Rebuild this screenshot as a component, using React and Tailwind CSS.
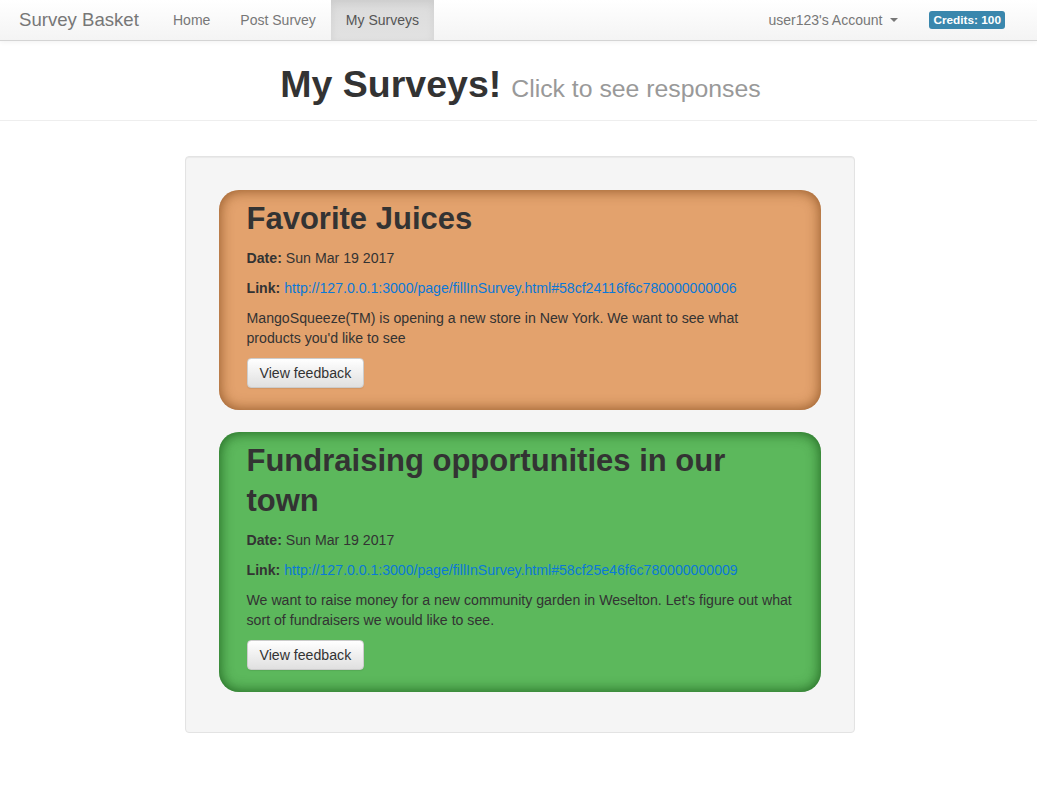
import React from "react";

const font = { fontFamily: '"Liberation Sans", Arial, sans-serif' };

function Card({ color, shadow, title, date, link, desc }) {
  return (
    <div
      className={`rounded-[20px] pt-[9px] pb-[22px] pl-[28px] pr-[27px] mb-[22px] ${color} ${shadow}`}
    >
      <h2 className="text-[31px] leading-[40px] font-bold text-[#333] mb-[9px]">{title}</h2>
      <p className="text-[14.15px] leading-[20px] text-[#333] mb-[10px]">
        <b>Date:</b> {date}
      </p>
      <p className="text-[14.15px] leading-[20px] text-[#333] mb-[10px]">
        <b>Link:</b> <a className="text-[#0a78d8] text-[14.1px]">{link}</a>
      </p>
      <p className="text-[14.15px] leading-[20px] text-[#333] mb-[10px]">{desc}</p>
      <button className="text-[14.15px] leading-[20px] text-[#333] px-[12px] py-[4px] border border-[#ccc] rounded-[4px] bg-gradient-to-b from-white to-[#e0e0e0] shadow-[inset_0_1px_0_rgba(255,255,255,0.15),0_1px_1px_rgba(0,0,0,0.075)]">
        View feedback
      </button>
    </div>
  );
}

export default function App() {
  return (
    <div className="min-h-[795px] bg-white" style={font}>
      {/* Navbar */}
      <div className="h-[41px] flex items-stretch border-b border-[#d4d4d4] bg-gradient-to-b from-white to-[#f4f4f4] shadow-[0_1px_5px_rgba(0,0,0,0.06)]">
        <div className="w-[158px] pl-[19px] flex items-center text-[18.6px] text-[#777]">Survey Basket</div>
        <div className="flex items-stretch text-[14px] text-[#777]">
          <div className="px-[15px] flex items-center">Home</div>
          <div className="px-[15px] flex items-center">Post Survey</div>
          <div className="px-[15px] flex items-center text-[#555] bg-gradient-to-b from-[#dbdbdb] to-[#e2e2e2] shadow-[inset_0_3px_9px_rgba(0,0,0,0.075)]">
            My Surveys
          </div>
        </div>
        <div className="flex-1" />
        <div className="flex items-center text-[14px] text-[#777] pr-[31px]">
          user123's Account
          <span className="ml-[8px] inline-block w-0 h-0 border-l-[4px] border-r-[4px] border-t-[4px] border-l-transparent border-r-transparent border-t-[#777]" />
        </div>
        <div className="flex items-center pr-[32px]">
          <span className="bg-[#3a87ad] text-white font-bold text-[11.8px] leading-[12px] px-[4px] pt-[3px] pb-[3px] rounded-[3px]">
            Credits: 100
          </span>
        </div>
      </div>

      {/* Page header */}
      <div className="h-[80px] pt-[23px] border-b border-[#eee]">
        <h1 className="h-[40px] flex items-baseline justify-center text-[37.5px] leading-[40px] font-bold text-[#333] pl-[4px]">
          <span>My Surveys!</span>
          <small className="ml-[10px] text-[24.8px] leading-[40px] font-normal text-[#999]">Click to see responses</small>
        </h1>
      </div>

      {/* Well */}
      <div className="pt-[35px] flex justify-center pl-[2px]">
        <div className="w-[670px] bg-[#f5f5f5] border border-[#e3e3e3] rounded-[4px] pt-[33px] pb-[18px] px-[33px] shadow-[inset_0_1px_1px_rgba(0,0,0,0.05)]">
          <Card
            color="bg-[#e3a26d]"
            shadow="shadow-[inset_0_0_14px_rgba(110,55,10,0.75)]"
            title="Favorite Juices"
            date="Sun Mar 19 2017"
            link="http://127.0.0.1:3000/page/fillInSurvey.html#58cf24116f6c780000000006"
            desc="MangoSqueeze(TM) is opening a new store in New York. We want to see what products you'd like to see"
          />
          <Card
            color="bg-[#5cb85c]"
            shadow="shadow-[inset_0_0_14px_rgba(10,70,10,0.8)]"
            title="Fundraising opportunities in our town"
            date="Sun Mar 19 2017"
            link="http://127.0.0.1:3000/page/fillInSurvey.html#58cf25e46f6c780000000009"
            desc="We want to raise money for a new community garden in Weselton. Let's figure out what sort of fundraisers we would like to see."
          />
        </div>
      </div>
    </div>
  );
}
